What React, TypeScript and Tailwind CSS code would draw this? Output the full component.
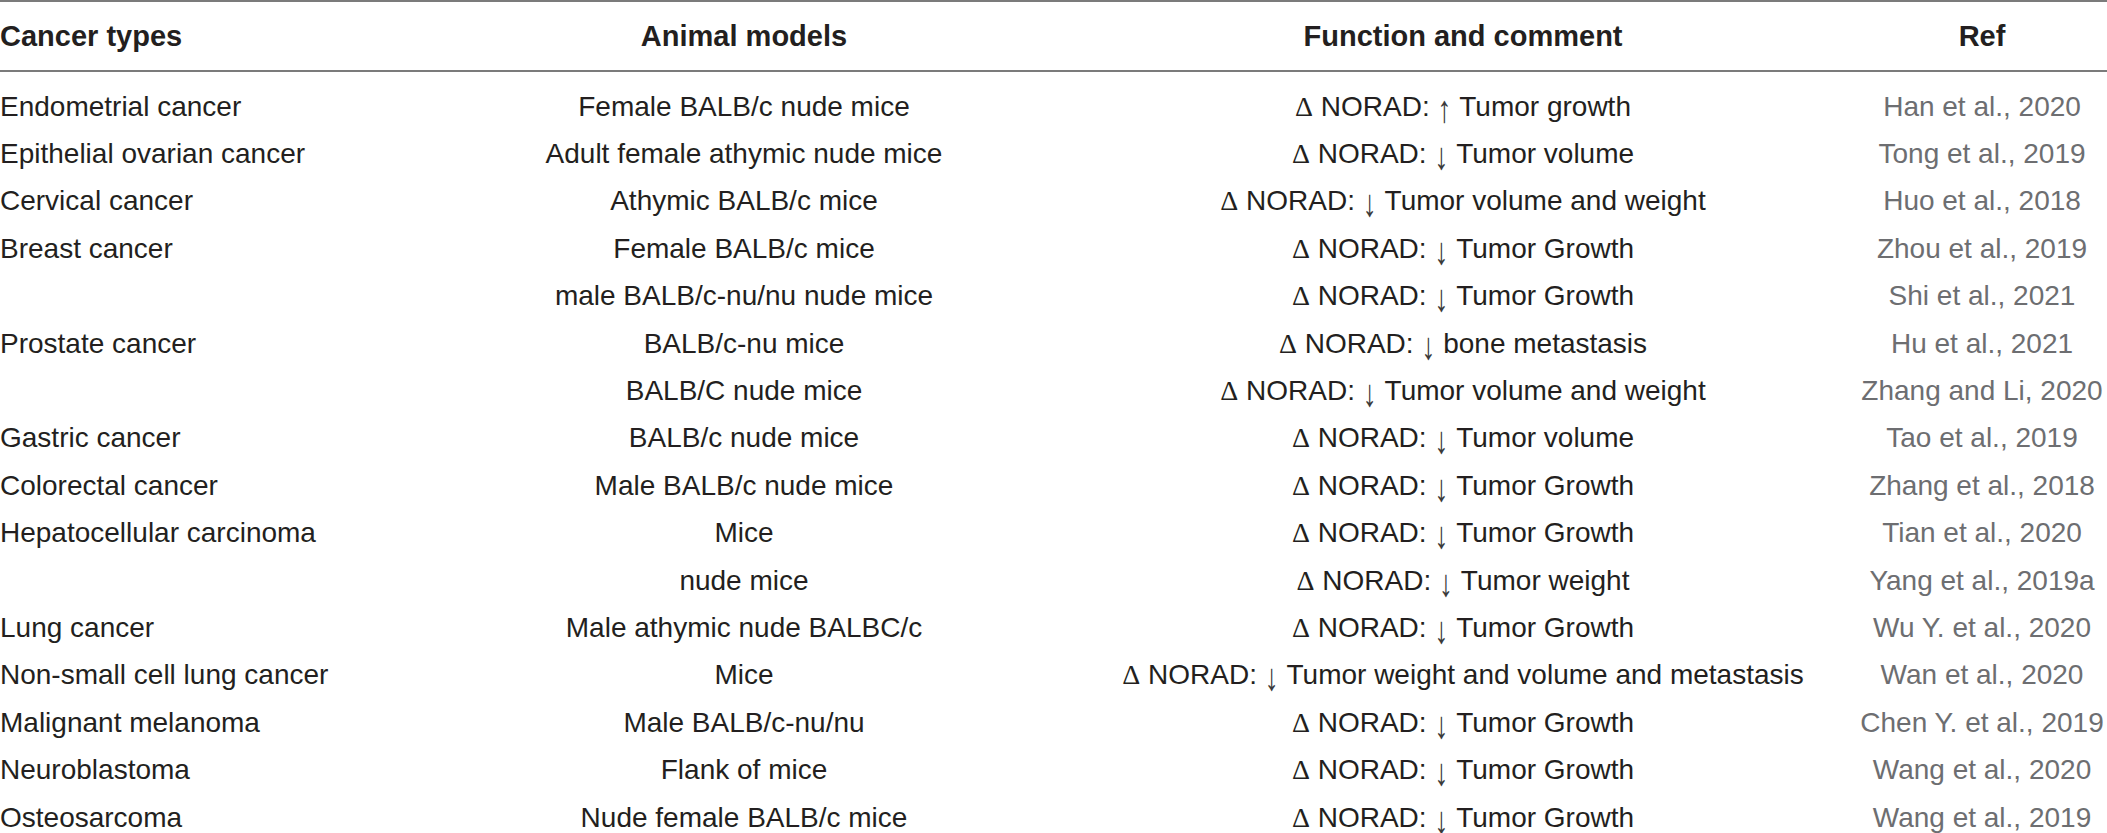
const rows = [
  { type: 'Endometrial cancer', model: 'Female BALB/c nude mice', up: true, fn: 'Tumor growth', ref: 'Han et al., 2020' },
  { type: 'Epithelial ovarian cancer', model: 'Adult female athymic nude mice', fn: 'Tumor volume', ref: 'Tong et al., 2019' },
  { type: 'Cervical cancer', model: 'Athymic BALB/c mice', fn: 'Tumor volume and weight', ref: 'Huo et al., 2018' },
  { type: 'Breast cancer', model: 'Female BALB/c mice', fn: 'Tumor Growth', ref: 'Zhou et al., 2019' },
  { type: '', model: 'male BALB/c-nu/nu nude mice', fn: 'Tumor Growth', ref: 'Shi et al., 2021' },
  { type: 'Prostate cancer', model: 'BALB/c-nu mice', fn: 'bone metastasis', ref: 'Hu et al., 2021' },
  { type: '', model: 'BALB/C nude mice', fn: 'Tumor volume and weight', ref: 'Zhang and Li, 2020' },
  { type: 'Gastric cancer', model: 'BALB/c nude mice', fn: 'Tumor volume', ref: 'Tao et al., 2019' },
  { type: 'Colorectal cancer', model: 'Male BALB/c nude mice', fn: 'Tumor Growth', ref: 'Zhang et al., 2018' },
  { type: 'Hepatocellular carcinoma', model: 'Mice', fn: 'Tumor Growth', ref: 'Tian et al., 2020' },
  { type: '', model: 'nude mice', fn: 'Tumor weight', ref: 'Yang et al., 2019a' },
  { type: 'Lung cancer', model: 'Male athymic nude BALBC/c', fn: 'Tumor Growth', ref: 'Wu Y. et al., 2020' },
  { type: 'Non-small cell lung cancer', model: 'Mice', fn: 'Tumor weight and volume and metastasis', ref: 'Wan et al., 2020' },
  { type: 'Malignant melanoma', model: 'Male BALB/c-nu/nu', fn: 'Tumor Growth', ref: 'Chen Y. et al., 2019' },
  { type: 'Neuroblastoma', model: 'Flank of mice', fn: 'Tumor Growth', ref: 'Wang et al., 2020' },
  { type: 'Osteosarcoma', model: 'Nude female BALB/c mice', fn: 'Tumor Growth', ref: 'Wang et al., 2019' },
]

const cols = 'grid grid-cols-[520px_448px_990px_48px]'

export default function App() {
  return (
    <div className="w-[2107px] h-[833px] overflow-hidden bg-white font-['Liberation_Sans',Arial,sans-serif] text-[#231f20]">
      {/* Header */}
      <div className={`${cols} h-[72px] border-y-2 border-[#7b7b7b] text-[29px] font-bold`}>
        <div className="flex items-center whitespace-nowrap pt-[2px]">Cancer types</div>
        <div className="flex items-center justify-center whitespace-nowrap pt-[2px]">Animal models</div>
        <div className="flex items-center justify-center whitespace-nowrap pt-[2px]">Function and comment</div>
        <div className="flex items-center justify-center whitespace-nowrap pt-[2px]">Ref</div>
      </div>

      {/* Body */}
      <div className="pt-[11px] text-[28px]">
        {rows.map((r, i) => (
          <div key={i} className={`${cols} h-[47.4px]`}>
            <div className="flex items-center whitespace-nowrap">{r.type}</div>
            <div className="flex items-center justify-center whitespace-nowrap">{r.model}</div>
            <div className="flex items-center justify-center whitespace-nowrap">
              <span className="font-['Liberation_Serif',serif]">Δ</span>
              <span>&nbsp;NORAD:&nbsp;</span>
              <span className="inline-block text-[28px] scale-y-[1.35] translate-y-[3px] text-[#3a3a3a]">{r.up ? '↑' : '↓'}</span>
              <span>&nbsp;{r.fn}</span>
            </div>
            <div className="flex items-center justify-center whitespace-nowrap text-[#6d6e71]">{r.ref}</div>
          </div>
        ))}
      </div>
    </div>
  )
}
